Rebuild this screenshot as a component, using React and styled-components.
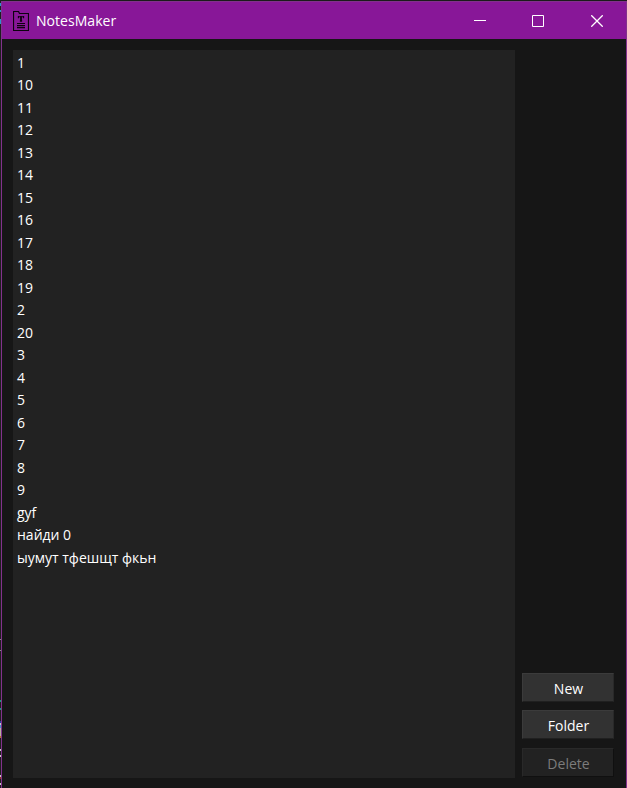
import React from 'react';
import styled, { createGlobalStyle } from 'styled-components';

const GlobalStyle = createGlobalStyle`
  * { box-sizing: border-box; }
  body {
    margin: 0;
    overflow: hidden;
    background: #161616;
    font-family: "Open Sans", "Noto Sans", sans-serif;
    font-size: 14px;
    color: #fff;
  }
`;

const speck = (color, from, to) =>
  `transparent ${from}px, ${color} ${from}px, ${color} ${to}px, transparent ${to}px`;

const specks = [
  ['#2f8fd0', 3, 6],
  ['#2f8fd0', 10, 12],
  ['#2f8fd0', 19, 24],
  ['#8a8a8a', 639, 640],
  ['#8a8a8a', 650, 651],
  ['#16a077', 700, 702],
  ['#16a077', 708, 710],
  ['#2a3aa0', 721, 723],
  ['#c8c8c8', 723, 725],
  ['#4a90c8', 725, 728],
  ['#b8b0a0', 728, 736],
  ['#b07830', 736, 738],
  ['#c8c8c8', 749, 751],
  ['#c8c8c8', 755, 757],
  ['#c8c8c8', 775, 777],
  ['#903020', 777, 779],
  ['#c8c8c8', 783, 785],
];

const Desktop = styled.div`
  display: flex;
  height: 788px;
  width: 627px;
  padding-top: 1px;
  background: #1b1b1b;
`;

const Backdrop = styled.div`
  width: 1px;
  margin-top: -1px;
  background: linear-gradient(${specks.map((s) => speck(...s)).join(', ')}) #1e1e1e;
`;

const Window = styled.div`
  flex: 1;
  display: flex;
  flex-direction: column;
  border: solid #82318c;
  border-width: 1px 1px 0;
  background: #161616;
`;

const TitleBar = styled.header`
  display: flex;
  align-items: center;
  height: 37px;
  padding-left: 11px;
  background: #881798;
`;

const AppIcon = styled.svg`
  width: 16px;
  height: 20px;
  margin-top: 1px;
`;

const Title = styled.span`
  flex: 1;
  margin-left: 7px;
  line-height: 20px;
  letter-spacing: 0.04px;
`;

const ControlButton = styled.button`
  display: grid;
  place-items: center;
  width: 58.5px;
  height: 37px;
  padding: 0;
  border: 0;
  background: transparent;

  svg {
    width: 12px;
    height: 12px;
    fill: none;
    stroke: #fff;
  }
`;

const Content = styled.main`
  flex: 1;
  display: flex;
  gap: 7px;
  padding: 11px 12px 10px 11px;
`;

const NoteList = styled.ul`
  flex: 1;
  margin: 0;
  padding: 1.5px 4px;
  list-style: none;
  background: #222;
`;

const Note = styled.li`
  height: 22.52px;
  line-height: 22.52px;
  white-space: nowrap;
`;

const Actions = styled.div`
  display: flex;
  flex-direction: column;
  justify-content: flex-end;
  gap: 8px;
  width: 92px;
  padding-bottom: 1px;
`;

const ActionButton = styled.button`
  height: 29px;
  padding: 3px 0 0 1px;
  border: 1px solid;
  border-color: #3b3b3b #292929 #202020 #3b3b3b;
  background: #323232;
  color: #fff;
  font: inherit;
  line-height: 20px;

  &:disabled {
    margin-top: 1px;
    border-color: #292929 #101010 #101010 #292929;
    background: #222;
    color: #7c7c7c;
  }
`;

const notes = [
  '1', '10', '11', '12', '13', '14', '15', '16', '17', '18', '19',
  '2', '20', '3', '4', '5', '6', '7', '8', '9',
  'gyf', 'найди 0', 'ыумут тфешщт фкьн',
];

export default function App() {
  return (
    <>
      <GlobalStyle />
      <Desktop>
        <Backdrop />
        <Window>
          <TitleBar>
            <AppIcon viewBox="0 0 16 20" fill="none" stroke="#0c020e">
              <path d="M.5 .5H5.5L6.5 2.5H15.5V19.5H.5Z" strokeWidth="1.2" />
              <path d="M5 5.7H11M5.4 5V7.2M10.6 5V7.2M6.8 10H9.2" strokeWidth="1.1" />
              <path d="M8 5.2V10.4" strokeWidth="1.8" />
              <path d="M4 12.5H12M4 14.6H12M4 16.7H12" strokeWidth="1.2" />
            </AppIcon>
            <Title>NotesMaker</Title>
            <ControlButton aria-label="Minimize">
              <svg viewBox="0 0 12 12"><path d="M0 5.5H12" /></svg>
            </ControlButton>
            <ControlButton aria-label="Maximize">
              <svg viewBox="0 0 12 12"><path d="M.5 .5H11.5V11.5H.5Z" /></svg>
            </ControlButton>
            <ControlButton aria-label="Close">
              <svg viewBox="0 0 12 12"><path strokeWidth="1.3" d="M.3 .3L11.7 11.7M11.7 .3L.3 11.7" /></svg>
            </ControlButton>
          </TitleBar>
          <Content>
            <NoteList>
              {notes.map((note) => <Note key={note}>{note}</Note>)}
            </NoteList>
            <Actions>
              <ActionButton>New</ActionButton>
              <ActionButton>Folder</ActionButton>
              <ActionButton disabled>Delete</ActionButton>
            </Actions>
          </Content>
        </Window>
      </Desktop>
    </>
  );
}
